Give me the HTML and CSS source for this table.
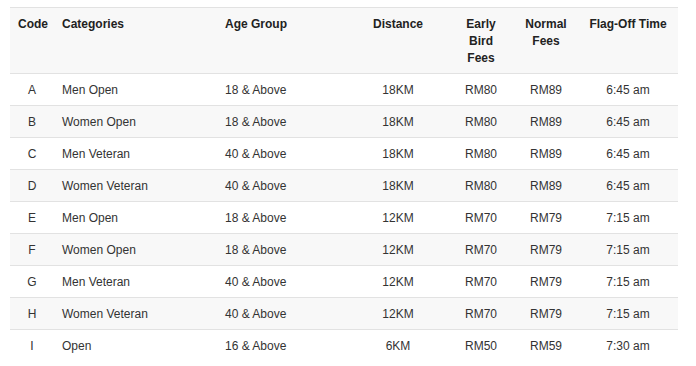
FILE: index.html
```html
<!DOCTYPE html>
<html>
<head>
<meta charset="utf-8">
<link rel="stylesheet" href="styles.css">
</head>
<body>
<div class="wrap">
<table class="fees">
  <colgroup>
    <col class="c-code"><col class="c-cat"><col class="c-age"><col class="c-dist"><col class="c-early"><col class="c-normal"><col class="c-time">
  </colgroup>
  <tbody>
    <tr class="head">
      <th class="ctr">Code</th>
      <th>Categories</th>
      <th>Age Group</th>
      <th class="ctr">Distance</th>
      <th class="ctr">Early Bird Fees</th>
      <th class="ctr">Normal Fees</th>
      <th class="ctr">Flag-Off Time</th>
    </tr>
    <tr><td class="ctr">A</td><td>Men Open</td><td>18 &amp; Above</td><td class="ctr">18KM</td><td class="ctr">RM80</td><td class="ctr">RM89</td><td class="ctr">6:45 am</td></tr>
    <tr><td class="ctr">B</td><td>Women Open</td><td>18 &amp; Above</td><td class="ctr">18KM</td><td class="ctr">RM80</td><td class="ctr">RM89</td><td class="ctr">6:45 am</td></tr>
    <tr><td class="ctr">C</td><td>Men Veteran</td><td>40 &amp; Above</td><td class="ctr">18KM</td><td class="ctr">RM80</td><td class="ctr">RM89</td><td class="ctr">6:45 am</td></tr>
    <tr><td class="ctr">D</td><td>Women Veteran</td><td>40 &amp; Above</td><td class="ctr">18KM</td><td class="ctr">RM80</td><td class="ctr">RM89</td><td class="ctr">6:45 am</td></tr>
    <tr><td class="ctr">E</td><td>Men Open</td><td>18 &amp; Above</td><td class="ctr">12KM</td><td class="ctr">RM70</td><td class="ctr">RM79</td><td class="ctr">7:15 am</td></tr>
    <tr><td class="ctr">F</td><td>Women Open</td><td>18 &amp; Above</td><td class="ctr">12KM</td><td class="ctr">RM70</td><td class="ctr">RM79</td><td class="ctr">7:15 am</td></tr>
    <tr><td class="ctr">G</td><td>Men Veteran</td><td>40 &amp; Above</td><td class="ctr">12KM</td><td class="ctr">RM70</td><td class="ctr">RM79</td><td class="ctr">7:15 am</td></tr>
    <tr><td class="ctr">H</td><td>Women Veteran</td><td>40 &amp; Above</td><td class="ctr">12KM</td><td class="ctr">RM70</td><td class="ctr">RM79</td><td class="ctr">7:15 am</td></tr>
    <tr><td class="ctr">I</td><td>Open</td><td>16 &amp; Above</td><td class="ctr">6KM</td><td class="ctr">RM50</td><td class="ctr">RM59</td><td class="ctr">7:30 am</td></tr>
  </tbody>
</table>
</div>
</body>
</html>
```

FILE: styles.css
```css
html, body {
  margin: 0;
  padding: 0;
  background: #fff;
}
.wrap {
  padding: 7px 18px 0 10px;
}
.fees {
  width: 668px;
  table-layout: fixed;
  border-collapse: collapse;
  border-spacing: 0;
  font-family: "Liberation Sans", Arial, sans-serif;
  font-size: 12px;
  line-height: 17px;
  color: #333;
}
.c-code { width: 44px; }
.c-cat { width: 163px; }
.c-age { width: 131px; }
.c-dist { width: 100px; }
.c-early { width: 66px; }
.c-normal { width: 64px; }
.c-time { width: 100px; }
.fees th,
.fees td {
  padding: 8px 8px 6px;
  border-top: 1px solid #e2e2e2;
  text-align: left;
  vertical-align: top;
}
.fees th {
  font-weight: bold;
  color: #222;
}
.fees .ctr {
  text-align: center;
}
.fees tr:nth-child(odd) {
  background: #f8f8f8;
}
```
